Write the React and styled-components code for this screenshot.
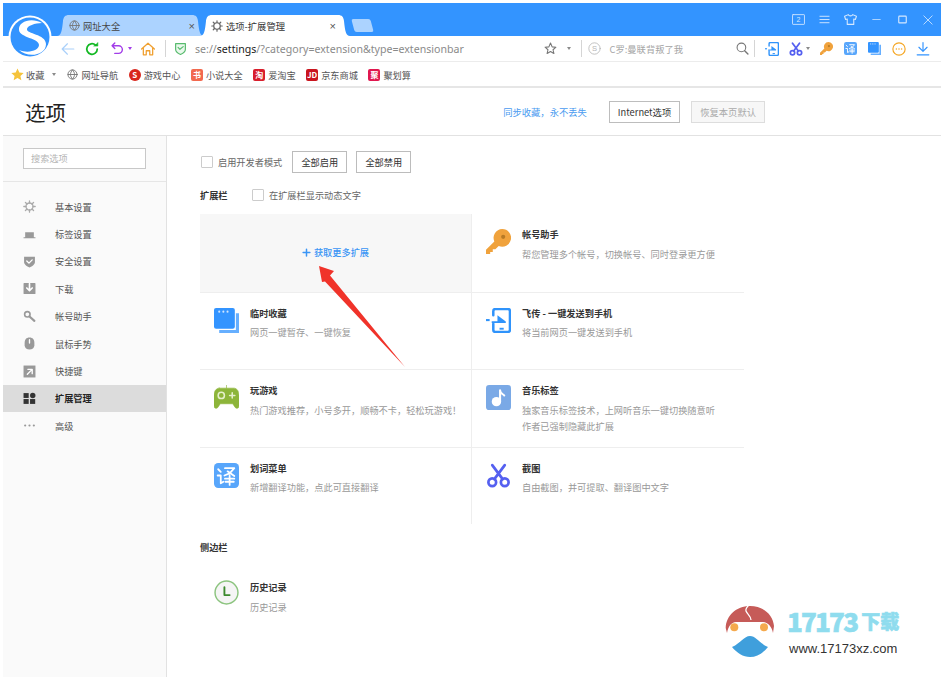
import React from "react";
import styled, { createGlobalStyle } from "styled-components";

const Global = createGlobalStyle`
  html, body { margin: 0; padding: 0; background: #fff; }
  body { font-family: "Noto Sans CJK SC", "Noto Sans", sans-serif; color: #333; }
  * { box-sizing: border-box; }
`;

const Page = styled.div`
  position: relative; width: 941px; height: 677px; padding: 3px 0 0 3px; overflow: hidden; background: #fff;
`;
const TitleBar = styled.div`
  height: 33px; background: #3394ff; display: flex; align-items: flex-end; padding-left: 54px; padding-right: 0;
`;
const TabShape = styled.div`
  width: ${p => p.$active ? 150 : 147}px; height: 21px; margin-right: ${p => p.$active ? 0 : -4}px; display: flex; align-items: center; gap: 3px;
  padding: ${p => p.$active ? "0 14px 0 11px" : "0 9px 0 12px"};
  font-size: 9.3px; color: ${p => p.$active ? "#333" : "#444"};
  background: ${p => p.$active ? "#fff" : "#acd3ff"};
  clip-path: ${p => p.$active
    ? 'path("M0 21 C4 21 5 16 6 6 C6.5 2 8 0 12 0 L138 0 C142 0 143.5 2 144 6 C145 16 146 21 150 21 Z")'
    : 'path("M0 21 C4 21 5 16 6 6 C6.5 2 8 0 12 0 L135 0 C139 0 140.5 2 141 6 C142 16 143 21 147 21 Z")'};
`;
const TabTitle = styled.span` flex: 1; white-space: nowrap; `;
const TabClose = styled.span` font-size: 11px; color: #555; font-family: "Liberation Sans", sans-serif; `;
const NewTab = styled.div`
  width: 19px; height: 13px; margin: 0 0 4px 3px; background: #acd3ff; border-radius: 2px; transform: skewX(15deg);
`;
const WinControls = styled.div`
  margin-left: auto; display: flex; align-self: center; gap: 0;
`;
const Slot = styled.span`
  width: ${p => p.$w || 24}px; margin-left: ${p => p.$ml || 0}px; display: inline-flex; align-items: center; justify-content: center; flex: none;
`;
const WinSlot = styled(Slot)` width: 26px; `;

const Toolbar = styled.div`
  height: 26px; display: flex; align-items: center; padding-left: 53px; border-bottom: 1px solid #ececec; background: #fff;
`;
const Divider = styled.span`
  width: 1px; height: 17px; background: #d5d5d5; flex: none; margin-left: ${p => p.$ml || 0}px;
`;
const Url = styled.div`
  font-family: "Noto Sans", sans-serif; font-size: 10.6px; color: #8a8a8a; margin-left: 0; width: 277px; white-space: nowrap; flex: none;
  b { font-weight: 400; color: #222; }
`;
const Hot = styled.span`
  font-size: 9.3px; color: #a5a5a5; width: 125px; flex: none; margin-left: 2px; white-space: nowrap;
`;
const Caret = styled.span`
  width: 0; height: 0; border: 2.5px solid transparent; border-top: 3px solid ${p => p.$c || "#8a8a8a"}; border-bottom: 0; flex: none;
  margin-left: ${p => p.$ml || 0}px;
`;

const Bookmarks = styled.div`
  height: 26px; display: flex; align-items: center; padding: 1px 0 0 8px; border-bottom: 2px solid #e6e6e6; font-size: 9.2px; color: #555;
`;
const Mark = styled.div`
  display: flex; align-items: center; gap: ${p => p.$gap || 2}px; margin-left: ${p => p.$ml || 0}px; margin-right: ${p => p.$mr || 10.5}px; white-space: nowrap;
`;
const BadgeIcon = styled.span`
  width: 12px; height: 12px; border-radius: ${p => p.$round ? "50%" : "2px"}; background: ${p => p.$bg}; color: #fff; font-size: 8px; font-weight: 700;
  display: inline-flex; align-items: center; justify-content: center; line-height: 1; flex: none; margin-right: 1px;
`;

const Header = styled.div`
  height: 48px; display: flex; align-items: center; border-bottom: 1px solid #e2e2e2; padding-left: 22px; padding-right: 176px;
`;
const PageTitle = styled.h1`
  margin: 0; font-size: 20.5px; font-weight: 400; color: #222; flex: 1;
`;
const SyncLink = styled.span` font-size: 9.3px; color: #4a9bf0; margin-right: 22px; `;
const HeadBtn = styled.div`
  height: 22px; padding: 0 8px; display: flex; align-items: center; border: 1px solid ${p => p.$muted ? "#ddd" : "#bdbdbd"};
  font-size: 9.3px; color: ${p => p.$muted ? "#aaa" : "#333"}; background: ${p => p.$muted ? "#f7f7f7" : "#fff"}; margin-left: ${p => p.$ml || 0}px;
`;

const Body = styled.div` display: flex; height: 541px; `;
const Sidebar = styled.aside`
  width: 164px; flex: none; background: #fafafa; border-right: 1px solid #e2e2e2;
`;
const SearchWrap = styled.div`
  height: 46px; padding: 12px 20px 0; border-bottom: 1px solid #e6e6e6;
`;
const SearchBox = styled.div`
  width: 123px; height: 21px; background: #fff; border: 1px solid #c8c8c8; padding-left: 7px; font-size: 9.2px; line-height: 18px; color: #b5b5b5;
`;
const Menu = styled.div` padding-top: 11px; `;
const MenuItem = styled.div`
  height: 27.4px; display: flex; align-items: center; padding-left: 20px; gap: 13px; font-size: 9.2px;
  color: ${p => p.$active ? "#222" : "#555"}; font-weight: ${p => p.$active ? 700 : 400}; background: ${p => p.$active ? "#dcdcdc" : "transparent"};
`;
const MenuIcon = styled.span` width: 19px; height: 13px; display: flex; flex: none; `;
const Main = styled.main` flex: 1; padding: 15px 0 0 33px; `;
const Controls = styled.div` display: flex; align-items: center; height: 22px; font-size: 9.2px; color: #666; `;
const Check = styled.span`
  width: 12px; height: 12px; border: 1px solid #ccc; border-radius: 1px; background: #fff; margin: 0 5px 0 1px; flex: none;
`;
const Btn = styled.div`
  width: 55px; height: 22px; border: 1px solid #bcbcbc; font-size: 9.2px; color: #333; display: flex; align-items: center; justify-content: center; margin-left: ${p => p.$ml}px;
`;
const SectionRow = styled.div` display: flex; align-items: center; height: 20px; margin-top: 12px; font-size: 9.2px; color: #666; `;
const SectionName = styled.strong`
  font-size: 9.2px; font-weight: 700; color: #333; width: 51px; flex: none; display: block;
`;
const Grid = styled.div`
  display: grid; grid-template-columns: 272px 272px; width: 544px; margin-top: 9px;
`;
const Cell = styled.div`
  height: 77.5px; display: flex; padding: 15px 0 0 14px; gap: 11px;
  border-top: ${p => p.$first ? "none" : "1px solid #eee"};
  border-right: ${p => p.$left ? "1px solid #eee" : "none"};
`;
const MoreCell = styled.div`
  height: 77.5px; background: #f7f7f7; border-right: 1px solid #eee; display: flex; align-items: center; justify-content: center; gap: 3px;
  font-size: 9.2px; font-weight: 500; color: #3a95f5; padding-bottom: 1px;
`;
const IconBox = styled.div` width: 25px; height: 25px; flex: none; `;
const Texts = styled.div` margin-top: -2px; `;
const HistoryTexts = styled(Texts)` margin-top: 0; `;
const ItemTitle = styled.div` font-size: 9.2px; line-height: 14px; font-weight: 700; color: #333; margin-bottom: 4.5px; `;
const ItemDesc = styled.div` font-size: 9.2px; line-height: 16.5px; color: #999; white-space: nowrap; `;
const SideHeading = styled.div` margin-top: 16px; `;
const HistoryItem = styled(Cell)` border: none; height: auto; padding-top: 0; margin-top: 26px; `;

const Logo = styled.svg` position: absolute; left: 8px; top: 15px; `;
const Arrow = styled.svg` position: absolute; left: 310px; top: 260px; `;
const Watermark = styled.div`
  position: absolute; left: 723px; top: 600px; width: 200px; height: 60px; display: grid; grid-template-columns: 64px auto;
`;
const WmBrand = styled.div`
  display: flex; align-items: center; height: 30px; margin-top: 5px; color: #8fdcee; font-family: "Noto Sans CJK SC", sans-serif; font-weight: 900; white-space: nowrap;
  -webkit-text-stroke: 0.6px #8fdcee;
`;
const WmNum = styled.span` font-size: 26px; letter-spacing: -1.8px; margin-right: 4px; `;
const WmCn = styled.span` font-size: 19px; `;
const WmUrl = styled.div` font-family: "Liberation Sans", sans-serif; font-size: 13px; color: #333; margin: 6px 0 0 2px; white-space: nowrap; `;

const S = ({ w = 14, h, vb = "0 0 24 24", children, fill = "none", stroke }) => (
  <svg width={w} height={h || w} viewBox={vb} fill={fill} stroke={stroke} strokeWidth={stroke ? 2 : undefined} strokeLinecap="round" strokeLinejoin="round">{children}</svg>
);

const Globe = ({ w = 12 }) => (
  <S w={w} stroke="#777"><circle cx="12" cy="12" r="10" /><path d="M2 12h20M12 2c-6 6-6 14 0 20M12 2c6 6 6 14 0 20" /></S>
);
const Gear = ({ w = 13, c = "#666" }) => (
  <S w={w} stroke={c}><circle cx="12" cy="12" r="6.5" strokeWidth="2.4" /><path d="M12 1.5v4M12 18.5v4M1.5 12h4M18.5 12h4M4.5 4.5l3 3M16.5 16.5l3 3M19.5 4.5l-3 3M7.5 16.5l-3 3" strokeWidth="2.4" /></S>
);
const Scissors = ({ w = 14, c = "#5560f0", sw = 3 }) => (
  <S w={w} stroke={c}><g strokeWidth={sw}><circle cx="6" cy="18.5" r="3.7" /><circle cx="18" cy="18.5" r="3.7" /><path d="M8 15.5L18 2M16 15.5L6 2" /></g></S>
);
const Key = ({ w = 14 }) => (
  <S w={w} fill="#f0a23c"><path d="M15.5 0a8.5 8.5 0 1 1-3.3 16.3L9 19.5H6.5V22H4v2H0v-4l8-8A8.5 8.5 0 0 1 15.5 0z" /><circle cx="16.5" cy="7.5" r="2" fill="#b87a25" /></S>
);
const Translate = ({ w = 14 }) => (
  <S w={w} fill="#58a6fb"><rect width="24" height="24" rx="4" /><path d="M4 6l2.5 2.5M3.5 12h3v7.500l2.500-1.500M10.500 5h9l-4.500 5-5 2M13 8l6.500 4.500M10.500 15h9M15 12v9M11 18h8" stroke="#fff" strokeWidth="1.700" fill="none" /></S>
);
const Stack = ({ w = 14 }) => (
  <S w={w} fill="#3394ff"><path d="M5 21h16V5h3v19H5z" opacity=".75" /><rect width="20" height="20" rx="2" /><g fill="#cfe5ff"><circle cx="5" cy="3.500" r="1" /><circle cx="9" cy="3.500" r="1" /><circle cx="13" cy="3.500" r="1" /></g></S>
);
const SendPhone = ({ w = 14 }) => (
  <S w={w}>
    <path d="M7 7V3a2 2 0 0 1 2-2h12a2 2 0 0 1 2 2v18a2 2 0 0 1-2 2H9a2 2 0 0 1-2-2v-6" stroke="#2f93fb" strokeWidth="2.400" />
    <path d="M0 10.600h3.500v2H0z" fill="#2f93fb" />
    <path d="M5.500 12.800H11V7l8 6v1.500H5.500z" fill="#2f93fb" />
    <rect x="13" y="19" width="4" height="1.800" fill="#2f93fb" />
  </S>
);

const menuIcons = [
  <Gear w={13} c="#aaa" />,
  <S w={13}><path d="M4 8h16v9H4zM1 17h22v2H1z" fill="#999" /></S>,
  <S w={13}><path d="M2 3h20v10c0 5-5 8-10 10C7 21 2 18 2 13z" fill="#999" /><path d="M7 11l4 4 6-6" stroke="#fff" strokeWidth="2.500" /></S>,
  <S w={13}><rect x="1" y="2" width="22" height="20" rx="1" fill="#999" /><path d="M12 3v12M7 11l5 5 5-5" stroke="#fff" strokeWidth="3" /></S>,
  <S w={13}><circle cx="8" cy="8" r="5" stroke="#999" strokeWidth="3" /><path d="M12 12l9 8" stroke="#999" strokeWidth="4" /></S>,
  <S w={13}><path d="M12 1c6 0 9 4 9 10v4c0 5-4 8-9 8s-9-3-9-8v-4C3 5 6 1 12 1z" fill="#999" /><path d="M12 5v6" stroke="#fff" strokeWidth="2.500" /></S>,
  <S w={13}><rect x="1" y="1" width="22" height="22" fill="#999" /><path d="M8 17l8-8M9 8h8v8" stroke="#fff" strokeWidth="2.500" /></S>,
  <S w={13}><g fill="#333"><rect x="1" y="2" width="9.500" height="9" /><circle cx="18" cy="6.500" r="5" /><rect x="1" y="13" width="9.500" height="9" /><rect x="13" y="13" width="9.500" height="9" /></g></S>,
  <S w={13}><g fill="#999"><circle cx="4" cy="12" r="2" /><circle cx="12" cy="12" r="2" /><circle cx="20" cy="12" r="2" /></g></S>,
];
const menu = ["基本设置", "标签设置", "安全设置", "下载", "帐号助手", "鼠标手势", "快捷键", "扩展管理", "高级"];

const cells = [
  { t: "帐号助手", d: ["帮您管理多个帐号，切换帐号、同时登录更方便"], i: <Key w={25} /> },
  { t: "临时收藏", d: ["网页一键暂存、一键恢复"], i: <Stack w={25} /> },
  { t: "飞传 - 一键发送到手机", d: ["将当前网页一键发送到手机"], i: <SendPhone w={25} /> },
  { t: "玩游戏", d: ["热门游戏推荐，小号多开，顺畅不卡，轻松玩游戏！"], i: (
    <S w={25}><path d="M12 0v3M5 3h14c3 0 5 3 5 7v10c0 3-3 3-4 1l-2-3H6l-2 3c-1 2-4 2-4-1V10c0-4 2-7 5-7z" fill="#8db53a" stroke="#8db53a" strokeWidth=".6" /><circle cx="7" cy="10" r="3" stroke="#e6f0cc" strokeWidth="1.500" /><path d="M17.500 7.500v5M15 10h5" stroke="#e6f0cc" strokeWidth="1.500" /></S>
  ) },
  { t: "音乐标签", d: ["独家音乐标签技术，上网听音乐一键切换随意听", "作者已强制隐藏此扩展"], i: (
    <S w={25}><rect width="24" height="24" rx="3" fill="#7aa9e6" /><circle cx="10" cy="16" r="4.500" fill="#fff" /><path d="M13.500 16V5c0 3 2.500 3.500 4 5" stroke="#fff" strokeWidth="2" /></S>
  ) },
  { t: "划词菜单", d: ["新增翻译功能，点此可直接翻译"], i: <Translate w={25} /> },
  { t: "截图", d: ["自由截图，并可提取、翻译图中文字"], i: <Scissors w={25} sw={2.600} /> },
];

function Item({ c, left, first }) {
  return (
    <Cell $left={left} $first={first}>
      <IconBox>{c.i}</IconBox>
      <Texts>
        <ItemTitle>{c.t}</ItemTitle>
        {c.d.map(x => <ItemDesc key={x}>{x}</ItemDesc>)}
      </Texts>
    </Cell>
  );
}

export default function App() {
  return (
    <Page>
      <Global />
      <TitleBar>
        <TabShape>
          <Globe w={11} />
          <TabTitle>网址大全</TabTitle>
          <TabClose>×</TabClose>
        </TabShape>
        <TabShape $active>
          <Gear w={12} />
          <TabTitle>选项-扩展管理</TabTitle>
          <TabClose>×</TabClose>
        </TabShape>
        <NewTab />
        <WinControls>
          <WinSlot><S w={13}><rect x="1" y="3" width="22" height="18" rx="1" stroke="#d5e8ff" strokeWidth="1.600" /><text x="12" y="17" textAnchor="middle" fontSize="13" fill="#d5e8ff" fontFamily="Liberation Sans">2</text></S></WinSlot>
          <WinSlot><S w={11} stroke="#d5e8ff"><path d="M2 5h20M2 12h20M2 19h20" /></S></WinSlot>
          <WinSlot><S w={13} stroke="#d5e8ff"><path d="M8 3L1 6l2 6 3-1v10h12V11l3 1 2-6-7-3c-1 3-7 3-8 0z" /></S></WinSlot>
          <WinSlot><S w={9} stroke="#d5e8ff"><path d="M2 12h20" /></S></WinSlot>
          <WinSlot><S w={9} stroke="#d5e8ff"><rect x="2" y="3" width="20" height="18" rx="2" strokeWidth="3" /></S></WinSlot>
          <WinSlot><S w={10} stroke="#d5e8ff"><path d="M2 2l20 20M22 2L2 22" /></S></WinSlot>
        </WinControls>
      </TitleBar>

      <Toolbar>
        <Slot><S w={14} stroke="#a9d0fa"><path d="M22 12H2M11 3l-9 9 9 9" /></S></Slot>
        <Slot><S w={14} stroke="#12b823"><path d="M21 12a9 9 0 1 1-3-6.700" strokeWidth="3" /><path d="M15 7h7V1" fill="#12b823" strokeWidth="1" /></S></Slot>
        <Slot $ml={1}><S w={13} stroke="#a23de8"><path d="M7 2L2 7l5 5M2 7h12a6.500 6.500 0 0 1 0 14H7" strokeWidth="2.600" /></S></Slot>
        <Caret $c="#a23de8" $ml={-1} />
        <Slot $w={24} $ml={4}><S w={14} stroke="#f0a030"><path d="M1 12L12 2l11 10M4 10v12h5v-7h6v7h5V10" strokeWidth="2.200" /></S></Slot>
        <Divider $ml={5} />
        <Slot $w={29}><S w={13}><path d="M3 3h18v11c0 4-4 7-9 9-5-2-9-5-9-9z" stroke="#58bb6e" strokeWidth="2.200" fill="#e9f8ec" /><path d="M7.500 10l3.500 3.500 6-5" stroke="#58bb6e" strokeWidth="2.200" /></S></Slot>
        <Url>se://<b>settings</b>/?category=extension&amp;type=extensionbar</Url>
        <Slot $w={18} $ml={69}><S w={13} stroke="#777"><path d="M12 2l3 7 7 .6-5.300 4.700 1.600 7L12 17.500l-6.300 3.800 1.600-7L2 9.600 9 9z" /></S></Slot>
        <Caret $ml={7.500} />
        <Divider $ml={10} />
        <Slot $w={26}><S w={13} stroke="#b5b5b5"><circle cx="12" cy="12" r="10.500" strokeWidth="1.500" /><text x="12" y="17" textAnchor="middle" fontSize="14" fill="#b5b5b5" stroke="none" fontFamily="Liberation Sans">S</text></S></Slot>
        <Hot>C罗:曼联背叛了我</Hot>
        <Slot $w={16}><S w={13} stroke="#777"><circle cx="10" cy="10" r="8" /><path d="M16 16l6 6" strokeWidth="2.600" /></S></Slot>
        <Divider $ml={3} />
        <Slot $w={34}><SendPhone w={14} /></Slot>
        <Slot $w={14}><Scissors w={14} /></Slot>
        <Caret $ml={3.500} />
        <Slot $w={24} $ml={4.500}><Key w={13} /></Slot>
        <Slot $w={24}><Translate w={13} /></Slot>
        <Slot $w={24}><Stack w={13} /></Slot>
        <Slot $w={24}><S w={14}><circle cx="12" cy="12" r="10.500" stroke="#f5a623" strokeWidth="2" /><g fill="#f5a623"><circle cx="7.500" cy="12" r="1.300" /><circle cx="12" cy="12" r="1.300" /><circle cx="16.500" cy="12" r="1.300" /></g></S></Slot>
        <Slot $w={24}><S w={14} stroke="#3394ff"><path d="M12 1v14M5 9l7 7 7-7M2 22h20" /></S></Slot>
      </Toolbar>

      <Bookmarks>
        <Mark $mr={3}><S w={13} fill="#f5c33b"><path d="M12 1l3.400 7.400 8 .8-6 5.400 1.700 8L12 18.500l-7.100 4.100 1.700-8-6-5.400 8-.8z" /></S>收藏</Mark>
        <Caret $ml={5} />
        <Mark $ml={11} $gap={3}><Globe w={11} />网址导航</Mark>
        <Mark><BadgeIcon $round $bg="#d9261c">S</BadgeIcon>游戏中心</Mark>
        <Mark><BadgeIcon $bg="#f2694e">书</BadgeIcon>小说大全</Mark>
        <Mark><BadgeIcon $bg="#d81e2c">淘</BadgeIcon>爱淘宝</Mark>
        <Mark><BadgeIcon $bg="#c9151e">JD</BadgeIcon>京东商城</Mark>
        <Mark><BadgeIcon $bg="#e0174f">聚</BadgeIcon>聚划算</Mark>
      </Bookmarks>

      <Header>
        <PageTitle>选项</PageTitle>
        <SyncLink>同步收藏，永不丢失</SyncLink>
        <HeadBtn>Internet选项</HeadBtn>
        <HeadBtn $muted $ml={11}>恢复本页默认</HeadBtn>
      </Header>

      <Body>
        <Sidebar>
          <SearchWrap><SearchBox>搜索选项</SearchBox></SearchWrap>
          <Menu>
            {menu.map((m, i) => (
              <MenuItem key={m} $active={i === 7}><MenuIcon>{menuIcons[i]}</MenuIcon>{m}</MenuItem>
            ))}
          </Menu>
        </Sidebar>
        <Main>
          <Controls>
            <Check />启用开发者模式
            <Btn $ml={10}>全部启用</Btn>
            <Btn $ml={9}>全部禁用</Btn>
          </Controls>
          <SectionRow>
            <SectionName>扩展栏</SectionName>
            <Check />在扩展栏显示动态文字
          </SectionRow>
          <Grid>
            <MoreCell><S w={9} stroke="#3a95f5"><path d="M12 3v18M3 12h18" strokeWidth="4" /></S>获取更多扩展</MoreCell>
            <Item c={cells[0]} first />
            {cells.slice(1).map((c, i) => <Item key={c.t} c={c} left={i % 2 === 0} />)}
          </Grid>
          <SideHeading><SectionName>侧边栏</SectionName></SideHeading>
          <HistoryItem>
            <IconBox><S w={25}><circle cx="12" cy="12" r="11" stroke="#8cc47f" strokeWidth="1.400" fill="#f5f5f5" /><path d="M10 7v7.500h5" stroke="#3c8a2e" strokeWidth="1.800" /></S></IconBox>
            <HistoryTexts><ItemTitle>历史记录</ItemTitle><ItemDesc>历史记录</ItemDesc></HistoryTexts>
          </HistoryItem>
        </Main>
      </Body>

      <Logo width="44" height="44" viewBox="0 0 44 44">
        <circle cx="22" cy="22" r="21.500" fill="#fff" />
        <circle cx="22" cy="22" r="19.500" fill="#3394ff" />
        <path d="M34 8C24 2 10 6 11 15c1 8 20 8 20 15 0 5-10 9-20 5 8 8 27 6 27-6 0-10-20-10-19-15 0-3 8-6 15-6z" fill="#fff" />
      </Logo>

      <Arrow width="100" height="112" viewBox="0 0 100 112">
        <path d="M9 6L24 11 20 15.500 95 107 15 21.500 12 22z" fill="#f0332a" />
      </Arrow>

      <Watermark>
        <svg width="54" height="60" viewBox="0 0 54 60">
          <path d="M27 6C13 6 3 16 2.700 28L4 33C5 27 8 22 13 22H40C45 22 49 27 50 33L51 26C50 15 41 6 27 6z" fill="#c65b58" />
          <path d="M28 3C25 6 22 8 23 11c1 3 5 5 5 9" stroke="#fff" strokeWidth="1.300" fill="none" />
          <circle cx="11.300" cy="27.300" r="4" fill="#f5a94d" />
          <circle cx="41" cy="27.300" r="4" fill="#f5a94d" />
          <path d="M27 36c6 0 9 7 18 11-5 6-11 10-18 10S14 53 9 47c9-4 12-11 18-11z" fill="#3f9fdc" />
        </svg>
        <div>
          <WmBrand><WmNum>17173</WmNum><WmCn>下载</WmCn></WmBrand>
          <WmUrl>www.17173xz.com</WmUrl>
        </div>
      </Watermark>
    </Page>
  );
}
